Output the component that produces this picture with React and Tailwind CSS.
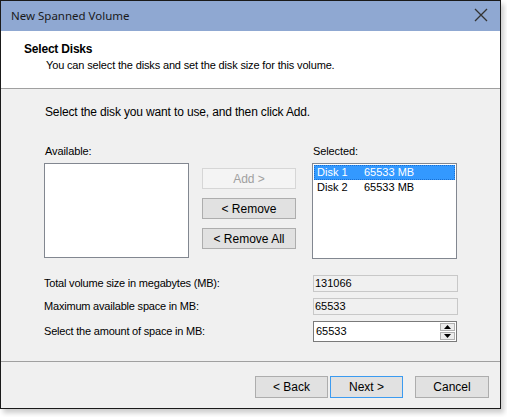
import React from "react";

const F = { fontFamily: '"Liberation Sans", Arial, sans-serif' };

function Btn({ children, disabled, focused, className = "" }) {
  return (
    <div
      className={
        "flex items-center justify-center text-[12px] " +
        (disabled
          ? "border border-[#d6d6d6] bg-[#f4f4f4] text-[#a0a0a0] "
          : focused
          ? "border border-[#3c9bf0] bg-[#e1e1e1] text-black "
          : "border border-[#adadad] bg-[#e1e1e1] text-black ") +
        className
      }
    >
      {children}
    </div>
  );
}

export default function App() {
  return (
    <div className="w-[507px] h-[417px] bg-white" style={F}>
      <div className="w-[501px] h-[409px] border border-[#1a1a1a] bg-[#f0f0f0] flex flex-col shadow-[3px_4px_5px_rgba(0,0,0,0.2)]">
        {/* title bar */}
        <div className="h-[30px] bg-[#8fa8d2] flex items-center justify-between pl-[10px] pr-[10px] shrink-0">
          <span className="text-[11.5px] text-[#1a1a1a]" style={{ fontFamily: '"Noto Sans", "Open Sans", sans-serif' }}>
            New Spanned Volume
          </span>
          <svg width="14" height="14" viewBox="0 0 14 14" className="mr-[2px] mt-[-2px]">
            <path d="M1 1 L13 13 M13 1 L1 13" stroke="#333" strokeWidth="1.3" />
          </svg>
        </div>
        {/* header */}
        <div className="h-[58px] bg-white border-b border-[#a0a0a0] shrink-0 pl-[23px] pt-[11px]">
          <div className="text-[12px] font-bold text-black leading-[14px] tracking-[-0.2px]">Select Disks</div>
          <div className="text-[11px] text-black leading-[14px] pl-[22px] mt-[2px] tracking-[-0.15px]">
            You can select the disks and set the disk size for this volume.
          </div>
        </div>
        {/* body */}
        <div className="flex-1 flex flex-col pl-[43px] pr-[43px]">
          <div className="text-[12px] mt-[16px] leading-[14px] pl-px tracking-[-0.15px]">
            Select the disk you want to use, and then click Add.
          </div>
          <div className="flex mt-[25px]">
            <div className="flex flex-col w-[145px]">
              <div className="text-[11px] leading-[14px] pl-px tracking-[-0.1px]">Available:</div>
              <div className="mt-[5px] h-[95px] border border-[#828790] bg-white" />
            </div>
            <div className="flex flex-col w-[94px] ml-[13px] mt-[24px] gap-[9px]">
              <Btn disabled className="h-[21px]">Add &gt;</Btn>
              <Btn className="h-[21px]">&lt; Remove</Btn>
              <Btn className="h-[21px]">&lt; Remove All</Btn>
            </div>
            <div className="flex flex-col w-[145px] ml-[16px]">
              <div className="text-[11px] leading-[14px] pl-px tracking-[-0.1px]">Selected:</div>
              <div className="mt-[5px] h-[96px] border border-[#828790] bg-white p-px">
                <div className="flex h-[15px] items-center bg-[#3399ff] text-white text-[11px] border border-dotted border-[#1a6fd0] pl-[2px]">
                  <span className="w-[47px]">Disk 1</span>
                  <span>65533 MB</span>
                </div>
                <div className="flex h-[15px] items-center text-black text-[11px] pl-[3px]">
                  <span className="w-[47px]">Disk 2</span>
                  <span>65533 MB</span>
                </div>
              </div>
            </div>
          </div>
          {/* fields */}
          <div className="flex flex-col mt-[16px] gap-[6px] text-[11px] tracking-[-0.2px]">
            <div className="flex items-center justify-between h-[17px]">
              <span>Total volume size in megabytes (MB):</span>
              <div className="w-[145px] h-[17px] border border-[#c8c8c8] bg-[#f0f0f0] flex items-center pl-px mr-[-1px] tracking-normal">131066</div>
            </div>
            <div className="flex items-center justify-between h-[17px]">
              <span>Maximum available space in MB:</span>
              <div className="w-[145px] h-[17px] border border-[#c8c8c8] bg-[#f0f0f0] flex items-center pl-px mr-[-1px] tracking-normal">65533</div>
            </div>
            <div className="flex items-center justify-between h-[21px]">
              <span>Select the amount of space in MB:</span>
              <div className="w-[144px] h-[21px] border border-[#7a7a7a] bg-white flex items-center pl-[2px] justify-between tracking-normal">
                <span>65533</span>
                <div className="flex flex-col h-full py-px pr-px gap-px">
                  <div className="w-[15px] flex-1 bg-[#ececec] border border-[#b0b0b0] flex items-center justify-center">
                    <svg width="7" height="4" viewBox="0 0 7 4"><path d="M3.5 0 L7 4 L0 4 Z" fill="#000" /></svg>
                  </div>
                  <div className="w-[15px] flex-1 bg-[#ececec] border border-[#b0b0b0] flex items-center justify-center">
                    <svg width="7" height="4" viewBox="0 0 7 4"><path d="M0 0 L7 0 L3.5 4 Z" fill="#000" /></svg>
                  </div>
                </div>
              </div>
            </div>
          </div>
        </div>
        {/* footer */}
        <div className="h-[47px] border-t border-[#a0a0a0] shrink-0 flex items-start pt-[14px] pr-[11px] justify-end">
          <Btn className="w-[73px] h-[22px]">&lt; Back</Btn>
          <Btn focused className="w-[73px] h-[22px] ml-[2px]">Next &gt;</Btn>
          <Btn className="w-[74px] h-[22px] ml-[12px]">Cancel</Btn>
        </div>
      </div>
    </div>
  );
}
